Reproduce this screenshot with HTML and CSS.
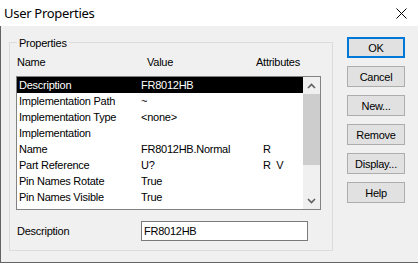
FILE: index.html
```html
<!DOCTYPE html>
<html>
<head>
<meta charset="utf-8">
<link rel="stylesheet" href="styles.css">
</head>
<body>
<div class="titlebar">
  <span class="title">User Properties</span>
  <svg class="close" width="11" height="11" viewBox="0 0 11 11"><path d="M0.5 0.5 L10.5 10.5 M10.5 0.5 L0.5 10.5" stroke="#000" stroke-width="1" fill="none"/></svg>
</div>
<div class="client">
  <div class="group">
    <span class="legend">Properties</span>
    <div class="head"><span>Name</span><span>Value</span><span>Attributes</span></div>
    <div class="listbox">
      <div class="rows">
        <div class="row sel"><span>Description</span><span>FR8012HB</span><span></span></div>
        <div class="row"><span>Implementation Path</span><span>~</span><span></span></div>
        <div class="row"><span>Implementation Type</span><span>&lt;none&gt;</span><span></span></div>
        <div class="row"><span>Implementation</span><span></span><span></span></div>
        <div class="row"><span>Name</span><span>FR8012HB.Normal</span><span>R</span></div>
        <div class="row"><span>Part Reference</span><span>U?</span><span>R  V</span></div>
        <div class="row"><span>Pin Names Rotate</span><span>True</span><span></span></div>
        <div class="row"><span>Pin Names Visible</span><span>True</span><span></span></div>
      </div>
      <div class="vscroll">
        <div class="arrow"><svg width="9" height="6" viewBox="0 0 9 6"><polyline points="1,5 4.5,1.5 8,5" fill="none" stroke="#606060" stroke-width="1.6"/></svg></div>
        <div class="thumb"></div>
        <div class="track"></div>
        <div class="arrow"><svg width="9" height="6" viewBox="0 0 9 6"><polyline points="1,1 4.5,4.5 8,1" fill="none" stroke="#606060" stroke-width="1.6"/></svg></div>
      </div>
    </div>
    <div class="field"><span class="flabel">Description</span><div class="input">FR8012HB</div></div>
  </div>
  <div class="buttons">
    <button class="btn default">OK</button>
    <button class="btn">Cancel</button>
    <button class="btn">New...</button>
    <button class="btn">Remove</button>
    <button class="btn">Display...</button>
    <button class="btn">Help</button>
  </div>
</div>
</body>
</html>
```
FILE: styles.css
```css
html, body {
  margin: 0;
  padding: 0;
}
body {
  width: 418px;
  height: 263px;
  overflow: hidden;
  background: #f0f0f0;
  font-family: "Liberation Sans", Arial, sans-serif;
  font-size: 11px;
  letter-spacing: -0.25px;
  color: #000;
}
.titlebar {
  height: 26px;
  background: #fff;
  display: flex;
  align-items: center;
  justify-content: space-between;
  padding: 0 11px 0 4px;
  box-sizing: border-box;
}
.title {
  font-family: "Noto Sans", sans-serif;
  font-size: 13px;
  letter-spacing: -0.3px;
  line-height: 26px;
}
.close {
  display: block;
}
.client {
  height: 237px;
  box-sizing: border-box;
  border-left: 1px solid #646464;
  border-bottom: 1px solid #646464;
  display: flex;
  align-items: flex-start;
  gap: 14px;
  padding: 11px 0 0 8px;
}
.group {
  position: relative;
  width: 324px;
  height: 209px;
  box-sizing: border-box;
  border: 1px solid #dcdcdc;
  margin-top: 5px;
  padding-top: 11px;
}
.legend {
  position: absolute;
  top: -6px;
  left: 7px;
  padding: 0 2px;
  background: #f0f0f0;
  line-height: 13px;
}
.head {
  display: grid;
  grid-template-columns: 130px 109px auto;
  padding-left: 7px;
  height: 16px;
  line-height: 16px;
  margin-bottom: 6px;
}
.listbox {
  margin-left: 6px;
  width: 305px;
  height: 134px;
  box-sizing: border-box;
  border: 1px solid #828282;
  background: #fff;
  display: flex;
}
.rows {
  flex: 1;
}
.row {
  display: grid;
  grid-template-columns: 122px 122px auto;
  padding-left: 2px;
  height: 16px;
  line-height: 16px;
  white-space: pre;
}
.row.sel {
  background: #000;
  color: #fff;
}
.vscroll {
  width: 17px;
  display: flex;
  flex-direction: column;
  background: #f0f0f0;
}
.arrow {
  height: 17px;
  display: flex;
  align-items: center;
  justify-content: center;
}
.thumb {
  height: 71px;
  background: #cdcdcd;
}
.track {
  flex: 1;
}
.field {
  display: flex;
  align-items: center;
  margin-top: 11px;
  padding-left: 7px;
}
.flabel {
  width: 124px;
}
.input {
  width: 167px;
  height: 20px;
  box-sizing: border-box;
  border: 1px solid #7a7a7a;
  background: #fff;
  padding-left: 2px;
  line-height: 18px;
}
.buttons {
  display: flex;
  flex-direction: column;
  gap: 8px;
}
.btn {
  width: 58px;
  height: 21px;
  box-sizing: border-box;
  border: 1px solid #adadad;
  background: #e1e1e1;
  color: #000;
  font: inherit;
  letter-spacing: inherit;
  padding: 0;
  margin: 0;
  display: flex;
  align-items: center;
  justify-content: center;
}
.btn.default {
  border: 2px solid #0078d7;
}
```
